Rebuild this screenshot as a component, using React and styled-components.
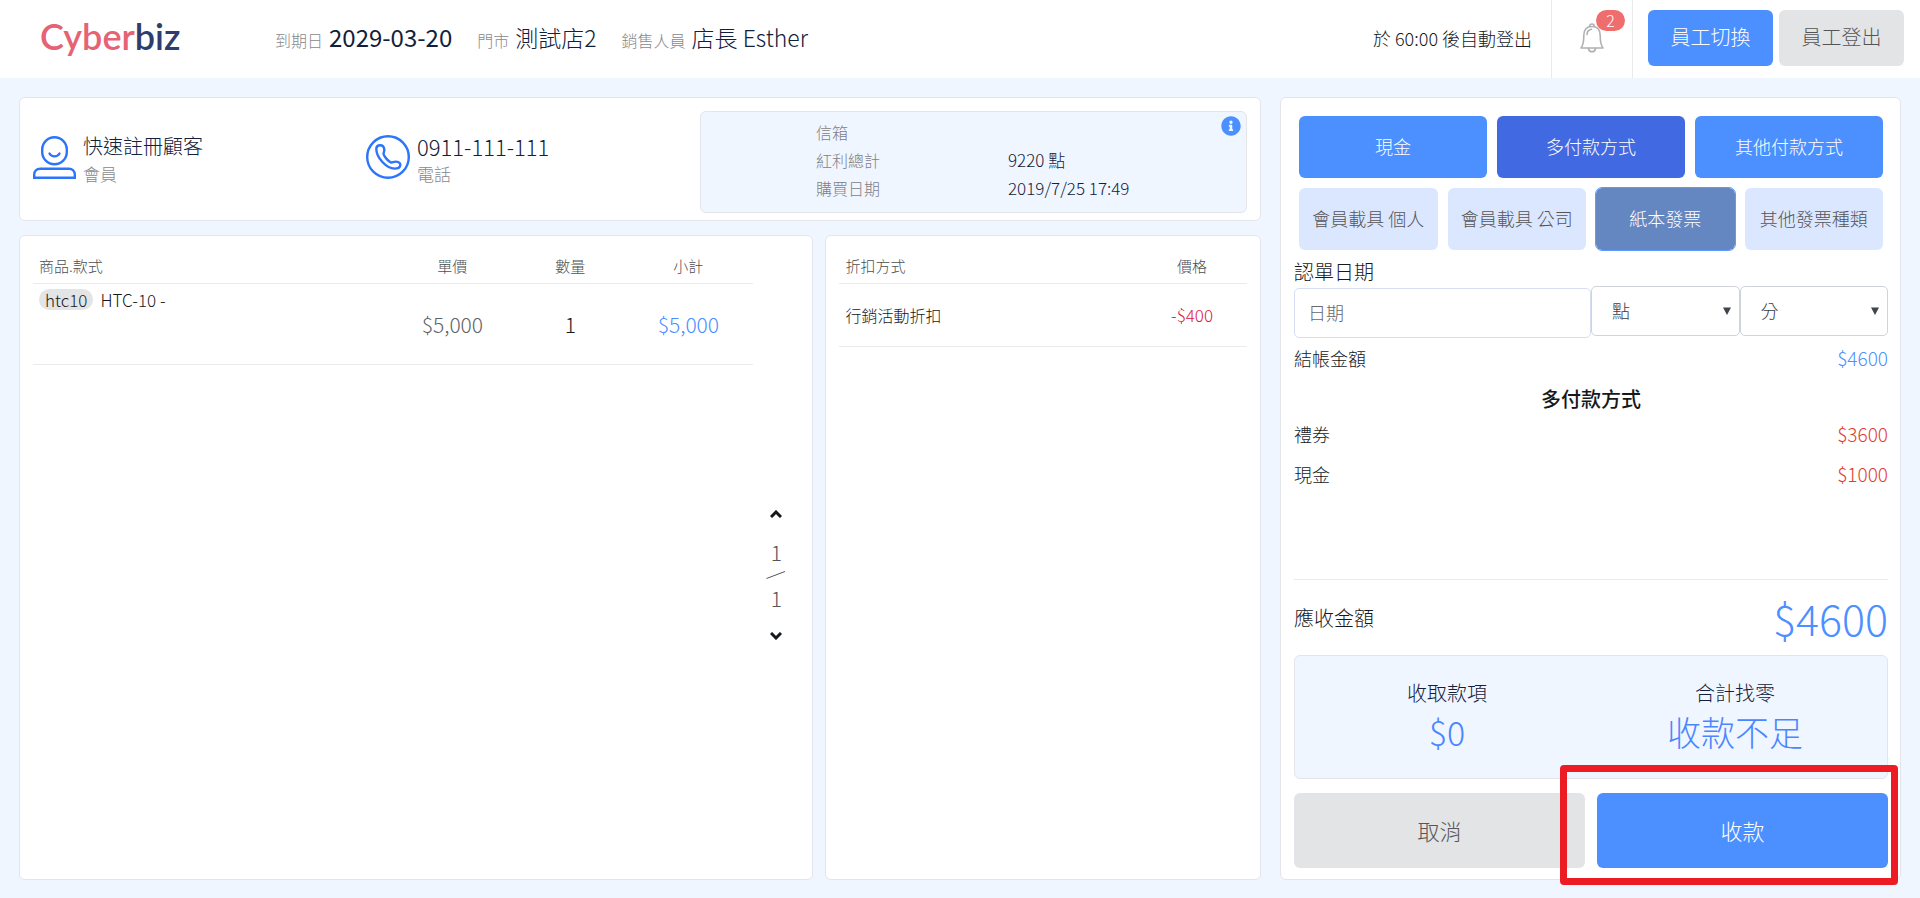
import React from "react";
import styled, { createGlobalStyle } from "styled-components";
import { FaInfoCircle } from "react-icons/fa";

const c = {
  page: "#f0f6ff",
  line: "#ebebeb",
  border: "#e3e5e8",
  blue: "#4c8fff",
  royal: "#4169e1",
  icon: "#2a75fb",
  grey: "#e3e4e6",
  ink: "#16191c",
  navy: "#12203a",
  muted: "#88898c",
  mid: "#555557",
  red: "#e33c33",
};

const GlobalStyle = createGlobalStyle`
  *, *::before, *::after { box-sizing: border-box; }
  body {
    margin: 0;
    background: ${c.page};
    color: ${c.ink};
    font-family: "Noto Sans CJK TC", sans-serif;
    font-weight: 300;
    font-size: 16px;
    line-height: 24px;
  }
  button, input, select { font: inherit; color: inherit; margin: 0; }
  button { cursor: pointer; }
  p, h2, h3, dl, dd { margin: 0; font-weight: inherit; }
`;

const Page = styled.div`
  min-height: 100vh;
  display: flex;
  flex-direction: column;
`;

const Header = styled.header`
  height: 78px;
  display: flex;
  align-items: center;
  background: #fff;
  padding: 0 16px 2px 40px;
`;

const Logo = styled.a`
  width: 235px;
  color: #e66375;
  font-family: Lato, sans-serif;
  font-weight: 600;
  font-size: 36px;
  line-height: 44px;
  padding-bottom: 4px;
  text-decoration: none;
`;
const LogoTail = styled.span`
  color: #2e3d6d;
`;

const Meta = styled.div`
  display: flex;
  align-items: baseline;
  flex: 1;
  gap: 25px;
`;
const MetaItem = styled.div`
  display: flex;
  align-items: baseline;
  gap: 6px;
  color: ${c.navy};
  font-size: 23px;
  line-height: 32px;
`;
const MetaLabel = styled.span`
  font-size: 16px;
  color: ${c.muted};
`;
const MetaDate = styled.time`
  font-size: 24px;
  font-weight: 400;
`;

const Countdown = styled.p`
  font-size: 18px;
  padding-right: 19px;
`;
const BellButton = styled.button`
  position: relative;
  align-self: flex-start;
  width: 82px;
  height: 78px;
  padding: 0 0 2px;
  border: solid ${c.line};
  border-width: 0 1px;
  background: none;
  margin-right: 15px;
  display: flex;
  align-items: center;
  justify-content: center;
`;
const Badge = styled.span`
  position: absolute;
  top: 10px;
  right: 7px;
  width: 29px;
  height: 21px;
  border-radius: 11px;
  background: #f06d6d;
  color: #fff;
  font-size: 16px;
  line-height: 20px;
`;

const Button = styled.button`
  border: 0;
  border-radius: 6px;
  padding: 0 0 2px;
  min-width: 0;
  white-space: nowrap;
  text-align: center;
  font-size: ${(p) => p.$size || 18}px;
  height: ${(p) => p.$h || 62}px;
  ${(p) =>
    ({
      primary: `background: ${c.blue}; color: #fff;`,
      active: `background: ${c.royal}; color: #fff;`,
      plain: `background: ${c.grey}; color: ${c.mid};`,
      soft: `background: #dbe7ff; color: ${c.mid};`,
      chosen: `background: #6486c1; color: #fff; outline: 1px solid #5f9bff;`,
    })[p.$kind || "primary"]}
`;
const StaffButtons = styled.div`
  display: grid;
  grid-template-columns: 125px 125px;
  gap: 6px;
`;

const Main = styled.main`
  flex: 1;
  display: grid;
  grid-template-columns: minmax(0, 2fr) minmax(0, 1fr);
  gap: 19px;
  padding: 19px 19px 18px;
`;
const Left = styled.div`
  display: flex;
  flex-direction: column;
  gap: 14px;
`;
const Card = styled.section`
  background: #fff;
  border: 1px solid ${c.border};
  border-radius: 6px;
`;

const Customer = styled(Card)`
  padding: 13px 13px 7px;
  display: grid;
  grid-template-columns: 333fr 334fr 547fr;
  align-items: center;
`;
const Contact = styled.div`
  display: flex;
  align-items: center;
  gap: 7px;
  padding-bottom: 4px;
  svg { margin-bottom: 6px; }
`;
const ContactValue = styled.p`
  color: ${c.navy};
  font-size: ${(p) => p.$size}px;
  line-height: 28px;
`;
const ContactLabel = styled.p`
  color: ${c.muted};
  font-size: 17px;
  line-height: 28px;
`;
const Details = styled.div`
  position: relative;
  height: 102px;
  padding: 6px 0 0 115px;
  background: ${c.page};
  border: 1px solid ${c.border};
  border-radius: 6px;
`;
const DetailList = styled.dl`
  display: grid;
  grid-template-columns: 192px 1fr;
  line-height: 28px;
`;
const DetailLabel = styled.dt`
  color: #7e8085;
`;
const DetailValue = styled.dd`
  color: ${c.navy};
  font-size: 17px;
`;
const InfoButton = styled.button`
  position: absolute;
  top: 4px;
  right: 5px;
  padding: 0;
  border: 0;
  background: none;
  color: ${c.blue};
  font-size: 20px;
  line-height: 20px;
  height: 20px;
`;

const Lists = styled.div`
  flex: 1;
  display: grid;
  grid-template-columns: minmax(0, 31fr) minmax(0, 17fr);
  gap: 12px;
`;
const Products = styled(Card)`
  display: flex;
  padding: 13px 13px 0;
`;
const Discounts = styled(Card)`
  padding: 13px 13px 0;
`;

const Table = styled.table`
  width: 100%;
  flex: 1;
  align-self: flex-start;
  table-layout: fixed;
  border-collapse: collapse;
  th:last-child, td:last-child { padding-right: 12px; }
`;
const Th = styled.th`
  width: ${(p) => p.$w || "auto"};
  height: 34px;
  padding: 0 6px;
  border-bottom: 1px solid ${c.line};
  color: #4c4e52;
  font-size: 15px;
  font-weight: inherit;
  text-align: ${(p) => p.$align || "center"};
`;
const Td = styled.td`
  height: ${(p) => p.$h}px;
  padding: 0 6px;
  border-bottom: 1px solid ${c.line};
  color: ${(p) => p.$color || "inherit"};
  font-size: ${(p) => p.$size || 21}px;
  text-align: ${(p) => p.$align || "center"};
  vertical-align: ${(p) => p.$valign || "middle"};
`;
const Sku = styled.span`
  display: inline-block;
  margin: 5px 7px 0 0;
  padding: 0 6px;
  border-radius: 11px;
  background: ${c.grey};
  line-height: 21px;
`;

const Pager = styled.nav`
  width: 46px;
  display: flex;
  flex-direction: column;
  align-items: center;
  justify-content: center;
  color: ${c.mid};
  font-size: 21px;
  margin-top: 22px;
  gap: 7px;
`;
const PagerButton = styled.button`
  border: 0;
  background: none;
  padding: 15px;
  display: flex;
  color: ${c.ink};
`;

const Checkout = styled(Card)`
  display: flex;
  flex-direction: column;
  padding: 18px 12px 11px 13px;
`;
const Choices = styled.div`
  display: grid;
  grid-template-columns: repeat(${(p) => p.$n}, minmax(0, 1fr));
  gap: 10px;
  margin: 0 5px 10px;
`;
const DateLabel = styled.label`
  font-size: 20px;
  line-height: 24px;
  margin-bottom: 2px;
`;
const DateRow = styled.div`
  display: grid;
  grid-template-columns: 2fr 1fr 1fr;
  align-items: start;
`;
const DateInput = styled.input`
  width: 100%;
  height: 50px;
  margin-top: 2px;
  padding: 0 13px 2px;
  border: 1px solid #d5def2;
  border-radius: 5px;
  background: #fff;
  font-size: 18px;
  &::placeholder { color: #66686c; opacity: 1; }
`;
const SelectWrap = styled.div`
  position: relative;
  color: #3a4045;
`;
const Select = styled.select`
  appearance: none;
  width: 100%;
  height: 50px;
  padding: 0 20px 2px;
  border: 1px solid #ced4da;
  border-radius: 5px;
  background: #fff;
  font-size: 18px;
`;
const Arrow = styled.svg`
  position: absolute;
  top: 21px;
  right: 9px;
  pointer-events: none;
`;
const Row = styled.div`
  display: flex;
  justify-content: space-between;
  align-items: center;
  font-size: 18px;
  line-height: 40px;
`;
const DueRow = styled(Row)`
  font-size: 20px;
  line-height: 75px;
`;
const Amount = styled.span`
  color: ${(p) => p.$color || c.blue};
  font-size: ${(p) => p.$size || 19}px;
`;
const SplitTitle = styled.h3`
  padding-top: 6px;
  font-size: 20px;
  font-weight: 500;
  line-height: 30px;
  text-align: center;
`;
const Payments = styled.div`
  flex: 1;
  border-bottom: 1px solid ${c.line};
`;
const Summary = styled.div`
  height: 124px;
  margin-bottom: 14px;
  padding: 22px 8px 0;
  display: grid;
  grid-template-columns: 1fr 1fr;
  text-align: center;
  background: ${c.page};
  border: 1px solid ${c.border};
  border-radius: 6px;
`;
const SummaryLabel = styled.p`
  color: ${c.navy};
  font-size: 20px;
  line-height: 30px;
`;
const SummaryValue = styled.p`
  color: #4c86ff;
  font-size: 34px;
  line-height: 48px;
`;
const Actions = styled.div`
  display: grid;
  grid-template-columns: 1fr 1fr;
  gap: 12px;
`;
const Highlighted = styled.div`
  position: relative;
  display: grid;
  &::after {
    content: "";
    position: absolute;
    inset: -28px -10px -17px -37px;
    border: 7px solid #ed1c24;
    border-radius: 4px;
    pointer-events: none;
  }
`;

const PersonIcon = () => (
  <svg width="43" height="43" viewBox="0 0 43 43" fill="none" stroke={c.icon} strokeWidth="2.4" aria-hidden="true">
    <rect x="9.2" y="1.2" width="24.6" height="27" rx="12.3" />
    <path d="M16.5 17.500a5.600 5.200 0 0 0 10 0" strokeLinecap="round" />
    <path d="M1.2 41.800v-3c0-3.600 2.400-6 6-6h28.600c3.600 0 6 2.400 6 6v3z" />
  </svg>
);
const PhoneIcon = () => (
  <svg width="44" height="44" viewBox="0 0 44 44" fill="none" stroke={c.icon} strokeWidth="2.400" strokeLinejoin="round" aria-hidden="true">
    <circle cx="22" cy="22" r="20.800" />
    <path d="M10.300 14C10.300 11.500 12 10.300 14.200 10.300c2.300 0 3.800 1.800 4.100 4.200.3 2.200-1.100 3.200-.7 4.700.7 2.500 4.800 7.200 7.200 8.200 1.600.6 2.600-1 5.200-.8 2.600.2 4.400 1.600 4.300 3.500-.2 2.500-2.900 3.500-5.700 3.500C20.500 33.600 10.300 22.500 10.300 14z" />
  </svg>
);
const BellIcon = () => (
  <svg width="24" height="30" viewBox="0 0 24 30" fill="none" stroke="#b0b1b3" strokeWidth="1.600" strokeLinecap="round" strokeLinejoin="round" aria-hidden="true">
    <path d="M9.800 3.200c0-3 4.400-3 4.400 0" />
    <path d="M1 25c1.800-2.200 2.800-5 2.800-12.500C3.800 6.500 7 3.500 12 3.500s8.200 3 8.200 9c0 7.500 1 10.300 2.800 12.500z" />
    <path d="M7 11.500c.2-3 1.800-4.800 4.500-5.200" />
    <path d="M8.500 25.500c.8 4.300 6.200 4.300 7 0" />
  </svg>
);
const Chevron = ({ d }) => (
  <svg width="12" height="8" viewBox="0 0 12 8" fill="none" stroke="currentColor" strokeWidth="3" aria-hidden="true">
    <path d={d} />
  </svg>
);
const Slash = () => (
  <svg width="20" height="8" viewBox="0 0 20 8" stroke={c.mid} aria-hidden="true">
    <path d="M0.500 7.500L19 0.500" />
  </svg>
);

const details = [
  ["信箱", ""],
  ["紅利總計", "9220 點"],
  ["購買日期", "2019/7/25 17:49"],
];
const invoices = [
  ["會員載具 個人", "soft"],
  ["會員載具 公司", "soft"],
  ["紙本發票", "chosen"],
  ["其他發票種類", "soft"],
];

const TimeSelect = ({ label }) => (
  <SelectWrap>
    <Select aria-label={label}>
      <option>{label}</option>
    </Select>
    <Arrow width="8" height="8" viewBox="0 0 8 8" aria-hidden="true">
      <path d="M0 0.500h8L4 8z" fill="#3f454b" />
    </Arrow>
  </SelectWrap>
);

export default function App() {
  return (
    <Page>
      <GlobalStyle />
      <Header>
        <Logo href="#">
          Cyber<LogoTail>biz</LogoTail>
        </Logo>
        <Meta>
          <MetaItem>
            <MetaLabel>到期日</MetaLabel>
            <MetaDate>2029-03-20</MetaDate>
          </MetaItem>
          <MetaItem>
            <MetaLabel>門市</MetaLabel>
            測試店2
          </MetaItem>
          <MetaItem>
            <MetaLabel>銷售人員</MetaLabel>
            店長 Esther
          </MetaItem>
        </Meta>
        <Countdown>於 60:00 後自動登出</Countdown>
        <BellButton aria-label="通知">
          <BellIcon />
          <Badge>2</Badge>
        </BellButton>
        <StaffButtons>
          <Button $h={56} $size={20}>員工切換</Button>
          <Button $h={56} $size={20} $kind="plain">員工登出</Button>
        </StaffButtons>
      </Header>

      <Main>
        <Left>
          <Customer>
            <Contact>
              <PersonIcon />
              <div>
                <ContactValue $size={20}>快速註冊顧客</ContactValue>
                <ContactLabel>會員</ContactLabel>
              </div>
            </Contact>
            <Contact>
              <PhoneIcon />
              <div>
                <ContactValue $size={22}>0911-111-111</ContactValue>
                <ContactLabel>電話</ContactLabel>
              </div>
            </Contact>
            <Details>
              <DetailList>
                {details.map(([label, value]) => (
                  <React.Fragment key={label}>
                    <DetailLabel>{label}</DetailLabel>
                    <DetailValue>{value}</DetailValue>
                  </React.Fragment>
                ))}
              </DetailList>
              <InfoButton aria-label="詳細資料">
                <FaInfoCircle />
              </InfoButton>
            </Details>
          </Customer>

          <Lists>
            <Products>
              <Table>
                <thead>
                  <tr>
                    <Th $align="left">商品.款式</Th>
                    <Th $w="118px">單價</Th>
                    <Th $w="118px">數量</Th>
                    <Th $w="124px">小計</Th>
                  </tr>
                </thead>
                <tbody>
                  <tr>
                    <Td $h={81} $size={17} $align="left" $valign="top">
                      <Sku>htc10</Sku>HTC-10 -
                    </Td>
                    <Td $color="#5f6468">$5,000</Td>
                    <Td>1</Td>
                    <Td $color={c.blue}>$5,000</Td>
                  </tr>
                </tbody>
              </Table>
              <Pager aria-label="頁數">
                <PagerButton aria-label="上一頁">
                  <Chevron d="M1 7l5-5 5 5" />
                </PagerButton>
                <span>1</span>
                <Slash />
                <span>1</span>
                <PagerButton aria-label="下一頁">
                  <Chevron d="M1 1l5 5 5-5" />
                </PagerButton>
              </Pager>
            </Products>
            <Discounts>
              <Table>
                <thead>
                  <tr>
                    <Th $align="left">折扣方式</Th>
                    <Th $w="104px">價格</Th>
                  </tr>
                </thead>
                <tbody>
                  <tr>
                    <Td $h={63} $size={16} $align="left">行銷活動折扣</Td>
                    <Td $size={17} $color="#dc143c">-$400</Td>
                  </tr>
                </tbody>
              </Table>
            </Discounts>
          </Lists>
        </Left>

        <Checkout>
          <Choices $n={3}>
            <Button>現金</Button>
            <Button $kind="active">多付款方式</Button>
            <Button>其他付款方式</Button>
          </Choices>
          <Choices $n={4}>
            {invoices.map(([label, kind]) => (
              <Button key={label} $kind={kind}>{label}</Button>
            ))}
          </Choices>
          <DateLabel htmlFor="date">認單日期</DateLabel>
          <DateRow>
            <DateInput id="date" placeholder="日期" />
            <TimeSelect label="點" />
            <TimeSelect label="分" />
          </DateRow>
          <Row>
            <span>結帳金額</span>
            <Amount>$4600</Amount>
          </Row>
          <SplitTitle>多付款方式</SplitTitle>
          <Payments>
            <Row>
              <span>禮券</span>
              <Amount $color={c.red}>$3600</Amount>
            </Row>
            <Row>
              <span>現金</span>
              <Amount $color={c.red}>$1000</Amount>
            </Row>
          </Payments>
          <DueRow>
            <span>應收金額</span>
            <Amount $size={43}>$4600</Amount>
          </DueRow>
          <Summary>
            <div>
              <SummaryLabel>收取款項</SummaryLabel>
              <SummaryValue>$0</SummaryValue>
            </div>
            <div>
              <SummaryLabel>合計找零</SummaryLabel>
              <SummaryValue>收款不足</SummaryValue>
            </div>
          </Summary>
          <Actions>
            <Button $h={75} $size={22} $kind="plain">取消</Button>
            <Highlighted>
              <Button $h={75} $size={22}>收款</Button>
            </Highlighted>
          </Actions>
        </Checkout>
      </Main>
    </Page>
  );
}
